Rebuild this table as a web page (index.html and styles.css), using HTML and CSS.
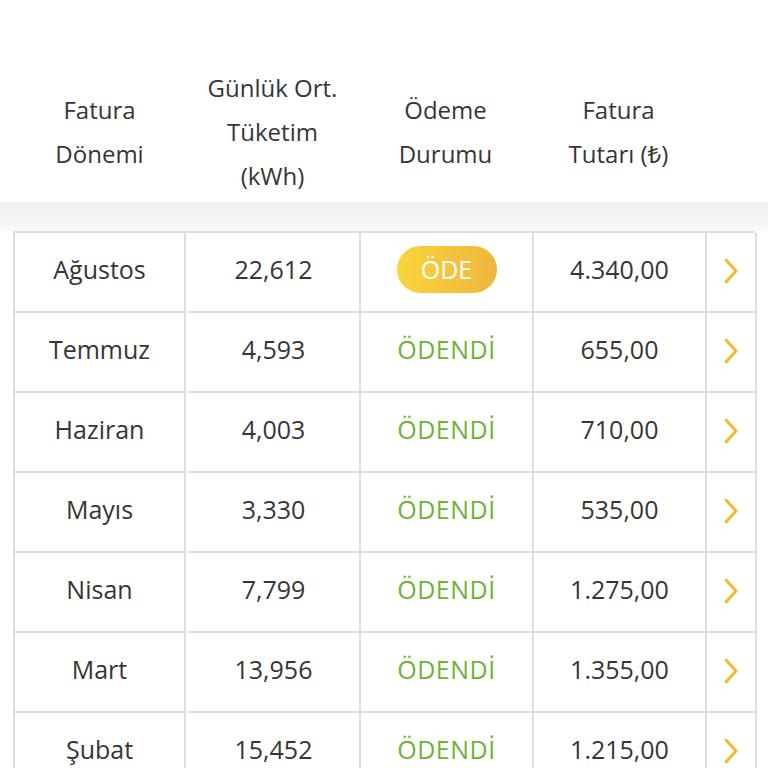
FILE: index.html
```html
<!DOCTYPE html>
<html lang="tr">
<head>
<meta charset="utf-8">
<link rel="stylesheet" href="styles.css">
</head>
<body>
<div class="page">
  <div class="head">
    <div class="hcell">Fatura<br>Dönemi</div>
    <div class="hcell">Günlük Ort.<br>Tüketim<br>(kWh)</div>
    <div class="hcell">Ödeme<br>Durumu</div>
    <div class="hcell">Fatura<br>Tutarı (₺)</div>
    <div class="hcell"></div>
  </div>
  <div class="band"></div>
  <div class="table">
    <div class="cell">Ağustos</div><div class="cell">22,612</div><div class="cell"><span class="pay">ÖDE</span></div><div class="cell">4.340,00</div><div class="cell"><svg class="chev" viewBox="0 0 16 28"><polyline points="3,3 13,14 3,25"/></svg></div>
    <div class="cell">Temmuz</div><div class="cell">4,593</div><div class="cell paid">ÖDENDİ</div><div class="cell">655,00</div><div class="cell"><svg class="chev" viewBox="0 0 16 28"><polyline points="3,3 13,14 3,25"/></svg></div>
    <div class="cell">Haziran</div><div class="cell">4,003</div><div class="cell paid">ÖDENDİ</div><div class="cell">710,00</div><div class="cell"><svg class="chev" viewBox="0 0 16 28"><polyline points="3,3 13,14 3,25"/></svg></div>
    <div class="cell">Mayıs</div><div class="cell">3,330</div><div class="cell paid">ÖDENDİ</div><div class="cell">535,00</div><div class="cell"><svg class="chev" viewBox="0 0 16 28"><polyline points="3,3 13,14 3,25"/></svg></div>
    <div class="cell">Nisan</div><div class="cell">7,799</div><div class="cell paid">ÖDENDİ</div><div class="cell">1.275,00</div><div class="cell"><svg class="chev" viewBox="0 0 16 28"><polyline points="3,3 13,14 3,25"/></svg></div>
    <div class="cell">Mart</div><div class="cell">13,956</div><div class="cell paid">ÖDENDİ</div><div class="cell">1.355,00</div><div class="cell"><svg class="chev" viewBox="0 0 16 28"><polyline points="3,3 13,14 3,25"/></svg></div>
    <div class="cell">Şubat</div><div class="cell">15,452</div><div class="cell paid">ÖDENDİ</div><div class="cell">1.215,00</div><div class="cell"><svg class="chev" viewBox="0 0 16 28"><polyline points="3,3 13,14 3,25"/></svg></div>
  </div>
</div>
</body>
</html>
```
FILE: styles.css
```css
html, body {
  margin: 0;
  padding: 0;
  background: #ffffff;
  overflow: hidden;
}
.page {
  width: 768px;
  height: 768px;
  font-family: "Open Sans", "Noto Sans", sans-serif;
  color: #363636;
  font-size: 25px;
}
.head {
  display: grid;
  grid-template-columns: 173px 173px 173px 173px 50px;
  padding: 66px 0 4px 13px;
  align-items: center;
  height: 132px;
  font-size: 24px;
}
.hcell {
  text-align: center;
  line-height: 44px;
}
.band {
  height: 29px;
  background: linear-gradient(#efefef, #f9f9f9);
}
.table {
  display: grid;
  grid-template-columns: 173px 173px 173px 173px 50px;
  grid-auto-rows: 80px;
  margin-left: 13px;
  width: 742px;
  border-top: 2px solid #dedede;
  border-left: 2px solid #dedede;
  box-sizing: border-box;
}
.cell {
  box-sizing: border-box;
  border-right: 2px solid #dedede;
  border-bottom: 2px solid #dedede;
  display: flex;
  align-items: center;
  justify-content: center;
  padding-bottom: 7px;
}
.cell:nth-child(5n+1) {
  width: 171px;
}
.paid {
  color: #6cb432;
  letter-spacing: 0.5px;
}
.pay {
  display: inline-flex;
  align-items: center;
  justify-content: center;
  width: 100px;
  height: 47px;
  border-radius: 24px;
  background: linear-gradient(90deg, #f9d53c, #f0b53c);
  color: #ffffff;
  line-height: 1;
  margin-top: 2px;
}
.chev {
  width: 16px;
  height: 28px;
  fill: none;
  stroke: #f2bb2e;
  stroke-width: 3;
  stroke-linecap: round;
  stroke-linejoin: round;
  margin-top: 4px;
}
```
